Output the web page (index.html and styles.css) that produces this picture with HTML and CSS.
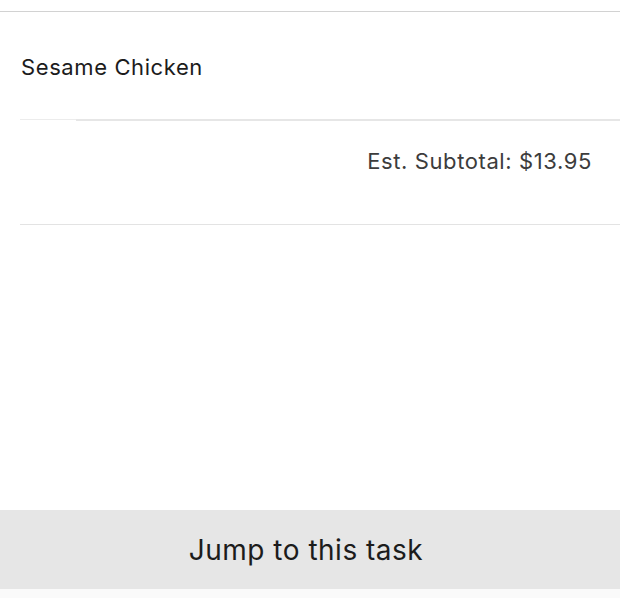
FILE: index.html
```html
<!DOCTYPE html>
<html>
<head>
<meta charset="utf-8">
<link rel="stylesheet" href="styles.css">
</head>
<body>
<div class="page">
  <div class="top-rule"></div>
  <div class="item-row">
    <span class="item-name">Sesame Chicken</span>
  </div>
  <div class="item-rule"><span class="rule-start"></span><span class="rule-rest"></span></div>
  <div class="subtotal-row">
    <span class="subtotal">Est. Subtotal: $13.95</span>
  </div>
  <div class="spacer"></div>
  <button class="jump">Jump to this task</button>
  <div class="bottom-strip"></div>
</div>
</body>
</html>
```
FILE: styles.css
```css
html, body {
  margin: 0;
  padding: 0;
  background: #ffffff;
}
body {
  font-family: Inter, "Liberation Sans", sans-serif;
  color: #1a1a1a;
}
.page {
  width: 620px;
  height: 598px;
  display: flex;
  flex-direction: column;
  overflow: hidden;
}
.top-rule {
  margin-top: 11px;
  height: 1px;
  background: #d2d2d2;
}
.item-row {
  height: 107px;
  padding-left: 21px;
  display: flex;
  align-items: center;
}
.item-name {
  font-size: 22px;
  letter-spacing: 0.6px;
  color: #1c1c1c;
  margin-top: 2px;
}
.item-rule {
  display: flex;
  margin-left: 20px;
  height: 2px;
}
.rule-start {
  width: 56px;
  height: 1px;
  background: #ececec;
}
.rule-rest {
  flex: 1;
  background: #e6e6e6;
}
.subtotal-row {
  height: 103px;
  padding-right: 28px;
  display: flex;
  justify-content: flex-end;
  align-items: flex-start;
  border-bottom: 1px solid #e3e3e3;
  margin-left: 20px;
}
.subtotal {
  margin-top: 27px;
  font-size: 22px;
  letter-spacing: 0.6px;
  color: #3c3c3c;
}
.spacer {
  flex: 1;
}
.jump {
  height: 79px;
  border: none;
  background: #e6e6e6;
  font-family: Inter, "Liberation Sans", sans-serif;
  font-size: 28px;
  letter-spacing: 0.5px;
  color: #1c1c1c;
  padding: 0 8px 0 0;
  margin: 0;
  width: 100%;
}
.bottom-strip {
  height: 9px;
  background: #fafafa;
}
```
